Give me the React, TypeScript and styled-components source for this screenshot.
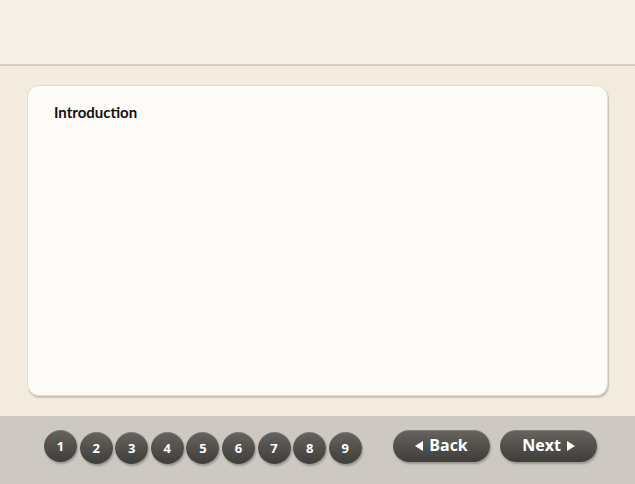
import styled, {createGlobalStyle} from 'styled-components';

const GlobalStyle = createGlobalStyle`
  html, body {
    margin: 0;
    padding: 0;
    background: #f3ebdd;
  }
  body {
    font-family: Lato, "Open Sans", sans-serif;
  }
`;

const pages = [1, 2, 3, 4, 5, 6, 7, 8, 9];

export default function App() {
  const current = 1;

  return (
    <>
      <GlobalStyle />
      <Page>
        <Header />
        <Body>
          <Card>
            <Title>Introduction</Title>
          </Card>
        </Body>
        <Footer>
          <PageList>
            {pages.map((p) => (
              <PageDot key={p} $active={p === current}>
                {p}
              </PageDot>
            ))}
          </PageList>
          <NavGroup>
            <NavButton>
              <Arrow $dir="left" />
              Back
            </NavButton>
            <NavButton>
              Next
              <Arrow $dir="right" />
            </NavButton>
          </NavGroup>
        </Footer>
      </Page>
    </>
  );
}

const Page = styled.div`
  width: 635px;
  height: 484px;
  display: flex;
  flex-direction: column;
  overflow: hidden;
`;

const Header = styled.div`
  height: 64px;
  background: #f4f0e6;
  border-bottom: 2px solid #d5cdbf;
  flex-shrink: 0;
`;

const Body = styled.div`
  flex: 1;
  background: #f3ebdd;
  padding: 19px 27px 20px 27px;
  display: flex;
`;

const Card = styled.div`
  flex: 1;
  background: #fcfbf8;
  border: 1px solid #e2ddd3;
  border-radius: 12px;
  box-shadow: 1px 2px 1px #c9c3b8;
  padding: 17px 26px;
`;

const Title = styled.h1`
  margin: 0;
  font-family: Lato, "Open Sans", sans-serif;
  font-weight: 700;
  font-size: 15px;
  color: #111;
`;

const Footer = styled.div`
  height: 68px;
  background: #cdc9c2;
  flex-shrink: 0;
  display: flex;
  align-items: flex-start;
  padding: 14px 38px 0 44px;
  justify-content: space-between;
  box-sizing: border-box;
`;

const PageList = styled.div`
  display: flex;
  gap: 2.6px;
  align-items: flex-start;
`;

const PageDot = styled.button<{$active?: boolean}>`
  width: 33px;
  height: 32px;
  border-radius: 50%;
  border: none;
  padding: 0;
  margin-top: ${(p) => (p.$active ? '0' : '2px')};
  background: linear-gradient(#67645f, #3f3d3a);
  box-shadow: 1px 2px 2px rgba(0, 0, 0, 0.25), inset 0 1px 0 rgba(255, 255, 255, 0.15);
  color: #fff;
  font-family: "Open Sans", sans-serif;
  font-weight: 700;
  font-size: 13px;
  display: flex;
  align-items: center;
  justify-content: center;
`;

const NavGroup = styled.div`
  display: flex;
  gap: 10px;
`;

const NavButton = styled.button`
  width: 97px;
  height: 32px;
  border-radius: 16px;
  border: none;
  background: linear-gradient(#67645f, #3f3d3a);
  box-shadow: 1px 2px 2px rgba(0, 0, 0, 0.25), inset 0 1px 0 rgba(255, 255, 255, 0.15);
  color: #fff;
  font-family: "Open Sans", sans-serif;
  font-weight: 700;
  font-size: 16px;
  display: flex;
  align-items: center;
  justify-content: center;
  gap: 6px;
  padding: 0 0 2px;
`;

const Arrow = styled.span<{$dir: 'left' | 'right'}>`
  width: 0;
  height: 0;
  border-top: 5px solid transparent;
  border-bottom: 5px solid transparent;
  ${(p) => (p.$dir === 'left' ? 'border-right: 8px solid #fff;' : 'border-left: 8px solid #fff;')}
  margin-top: 2px;
`;
